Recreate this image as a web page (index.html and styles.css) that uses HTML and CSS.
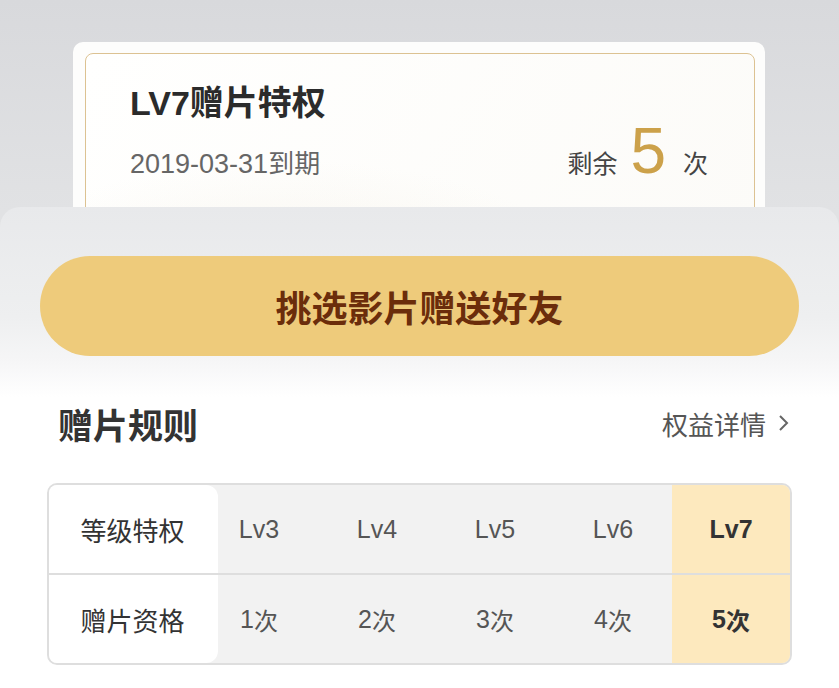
FILE: index.html
```html
<!DOCTYPE html>
<html lang="zh-CN">
<head>
    <meta charset="UTF-8">
    <meta name="viewport" content="width=device-width, initial-scale=1.0">
    <title>赠片特权</title>
    <link rel="stylesheet" href="styles.css">
</head>
<body>
    <div class="top">
        <div class="card">
            <div class="card-inner">
                <h1 class="card-title">LV7赠片特权</h1>
                <div class="card-row">
                    <span class="expire">2019-03-31<span class="cjk">到期</span></span>
                    <span class="remain">剩余 <b class="remain-num">5</b> 次</span>
                </div>
            </div>
        </div>
    </div>

    <div class="sheet">
        <button class="gift-btn" type="button">挑选影片赠送好友</button>

        <div class="rules-head">
            <h2>赠片规则</h2>
            <a class="more" href="#">权益详情
                <svg width="12" height="20" viewBox="0 0 12 20"><path d="M2 3l7 7-7 7" fill="none" stroke="#666" stroke-width="2"/></svg>
            </a>
        </div>

        <div class="rules">
            <div class="rules-label">
                <div class="cell">等级特权</div>
                <div class="cell">赠片资格</div>
            </div>
            <div class="rules-data">
                <div class="cell">Lv3</div>
                <div class="cell">Lv4</div>
                <div class="cell">Lv5</div>
                <div class="cell">Lv6</div>
                <div class="cell current">Lv7</div>
                <div class="cell">1<span class="cjk">次</span></div>
                <div class="cell">2<span class="cjk">次</span></div>
                <div class="cell">3<span class="cjk">次</span></div>
                <div class="cell">4<span class="cjk">次</span></div>
                <div class="cell current">5<span class="cjk">次</span></div>
            </div>
        </div>
    </div>
</body>
</html>
```

FILE: styles.css
```css
* {
    margin: 0;
    padding: 0;
    box-sizing: border-box;
}

body {
    font-family: "Liberation Sans", "Noto Sans CJK SC", sans-serif;
    background: linear-gradient(#d8d9dc, #e1e2e4 210px);
    width: 839px;
    height: 688px;
    overflow: hidden;
}

.top {
    padding: 42px 74px 0 73px;
}

.card {
    height: 165px;
    overflow: hidden;
    background: #fdfdfc;
    border-radius: 10px 10px 0 0;
    padding: 11px 10px 0 12px;
}

.card-inner {
    height: 200px;
    border: 1px solid #dcc292;
    border-radius: 8px;
    padding: 29px 44px 0 44px;
    background:
        radial-gradient(ellipse 420px 160px at 30% 110%, rgba(236, 228, 210, 0.3), transparent 70%),
        linear-gradient(120deg, #fffffe, #fcfbf8);
}

.card-title {
    font-size: 34px;
    line-height: 40px;
    font-weight: bold;
    color: #2b2b2b;
}

.card-row {
    display: flex;
    justify-content: space-between;
    align-items: baseline;
    line-height: 1;
    margin-top: -4px;
    padding-right: 2px;
}

.expire {
    font-size: 27px;
    color: #666;
}

.expire .cjk {
    font-size: 26px;
}

.remain {
    font-size: 25px;
    color: #444;
}

.remain-num {
    font-size: 64px;
    font-weight: normal;
    color: #cca14a;
    margin: 0 10px 0 6px;
}

.sheet {
    border-radius: 20px 20px 0 0;
    background: linear-gradient(#e8e9eb 0, #eeeff0 110px, #f6f6f7 155px, #fff 190px);
    padding: 49px 40px 0 40px;
    height: 481px;
}

.gift-btn {
    display: block;
    width: 100%;
    height: 100px;
    border: none;
    border-radius: 50px;
    background: #eecb7b;
    color: #6b2d0b;
    font-family: "Noto Sans CJK SC", sans-serif;
    font-size: 36px;
    font-weight: bold;
    cursor: pointer;
}

.rules-head {
    display: flex;
    justify-content: space-between;
    align-items: center;
    margin-top: 45px;
    padding: 0 9px 0 18px;
    height: 44px;
}

.rules-head h2 {
    font-family: "Noto Sans CJK SC", sans-serif;
    font-size: 35px;
    font-weight: bold;
    color: #333;
}

.more {
    display: flex;
    align-items: center;
    gap: 12px;
    font-family: "Noto Sans CJK SC", sans-serif;
    font-size: 26px;
    color: #555;
    text-decoration: none;
}

.rules {
    display: flex;
    margin: 38px 7px 0 7px;
    border: 2px solid #dedede;
    border-radius: 10px;
    overflow: hidden;
    background: #f2f2f2;
}

.cell {
    height: 90px;
    display: flex;
    align-items: center;
    justify-content: center;
    font-size: 25px;
    color: #555;
}

.cell .cjk {
    font-size: 24px;
}

.rules-label {
    position: relative;
    z-index: 1;
    width: 169px;
    margin-right: -18px;
    background: #fff;
    border-radius: 0 12px 12px 0;
}

.rules-label .cell {
    font-family: "Noto Sans CJK SC", sans-serif;
    font-size: 26px;
    color: #333;
    padding-right: 2px;
}

.rules-label .cell:first-child,
.rules-data .cell:nth-child(-n+5) {
    border-bottom: 2px solid #dedede;
}

.rules-label .cell:last-child,
.rules-data .cell:nth-child(n+6) {
    height: 88px;
}

.rules-data {
    flex: 1;
    display: grid;
    grid-template-columns: repeat(5, 1fr);
}

.rules-data .current {
    background: #fde9be;
    font-weight: bold;
    color: #333;
}
```
